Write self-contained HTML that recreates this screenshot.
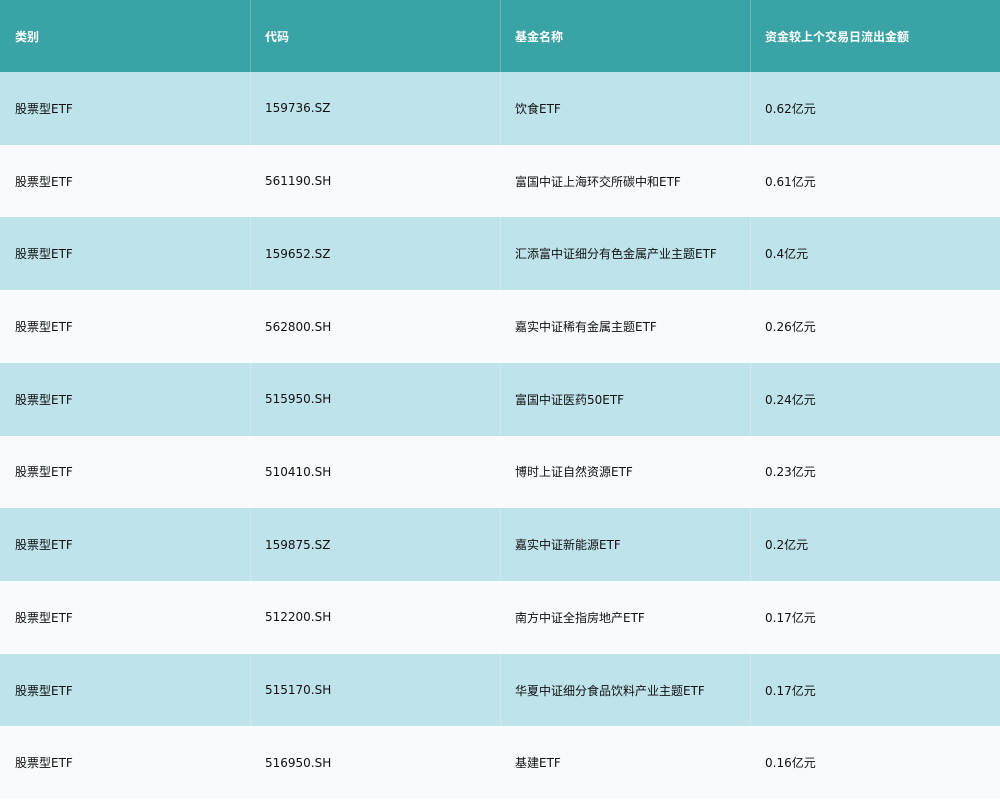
<!DOCTYPE html><html><head><meta charset="utf-8"><style>
body{margin:0;width:1000px;height:800px;overflow:hidden;font-family:"DejaVu Sans","Noto Sans CJK SC",sans-serif;font-size:12px;color:#111}
table{border-collapse:collapse;width:1000px;table-layout:fixed}
td,th{height:72.73px;padding:0 0 0 15px;text-align:left;border:none;box-sizing:border-box;box-shadow:inset 1px 0 0 rgba(255,255,255,.25)}
td:first-child,th:first-child{box-shadow:none}
th{background:#3aa3a6;color:#fff;font-weight:bold;height:72px}
tr:nth-child(even) td{background:#bee3ea}
tr:nth-child(odd) td{background:#f8fafc}
</style></head><body><table>
<tr><th>类别</th><th>代码</th><th>基金名称</th><th>资金较上个交易日流出金额</th></tr>
<tr><td>股票型ETF</td><td>159736.SZ</td><td>饮食ETF</td><td>0.62亿元</td></tr>
<tr><td>股票型ETF</td><td>561190.SH</td><td>富国中证上海环交所碳中和ETF</td><td>0.61亿元</td></tr>
<tr><td>股票型ETF</td><td>159652.SZ</td><td>汇添富中证细分有色金属产业主题ETF</td><td>0.4亿元</td></tr>
<tr><td>股票型ETF</td><td>562800.SH</td><td>嘉实中证稀有金属主题ETF</td><td>0.26亿元</td></tr>
<tr><td>股票型ETF</td><td>515950.SH</td><td>富国中证医药50ETF</td><td>0.24亿元</td></tr>
<tr><td>股票型ETF</td><td>510410.SH</td><td>博时上证自然资源ETF</td><td>0.23亿元</td></tr>
<tr><td>股票型ETF</td><td>159875.SZ</td><td>嘉实中证新能源ETF</td><td>0.2亿元</td></tr>
<tr><td>股票型ETF</td><td>512200.SH</td><td>南方中证全指房地产ETF</td><td>0.17亿元</td></tr>
<tr><td>股票型ETF</td><td>515170.SH</td><td>华夏中证细分食品饮料产业主题ETF</td><td>0.17亿元</td></tr>
<tr><td>股票型ETF</td><td>516950.SH</td><td>基建ETF</td><td>0.16亿元</td></tr>
</table></body></html>
